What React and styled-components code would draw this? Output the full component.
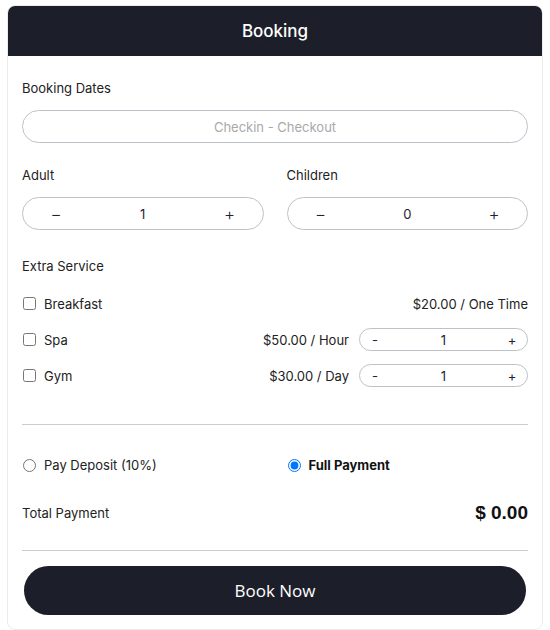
import { useState } from "react";
import styled, { createGlobalStyle } from "styled-components";

const GlobalStyle = createGlobalStyle`
  body {
    margin: 0;
    background: #fff;
    font-family: Inter, "Noto Sans", sans-serif;
    color: #222;
  }
`;

export default function App() {
  const [adult, setAdult] = useState(1);
  const [children, setChildren] = useState(0);
  const [spa, setSpa] = useState(1);
  const [gym, setGym] = useState(1);
  const [payment, setPayment] = useState("full");

  return (
    <>
      <GlobalStyle />
      <Card>
        <Header>Booking</Header>
        <Body>
          <Label>Booking Dates</Label>
          <DateInput placeholder="Checkin - Checkout" />

          <Guests>
            <div>
              <Label>Adult</Label>
              <Stepper>
                <StepButton onClick={() => setAdult(Math.max(0, adult - 1))}>−</StepButton>
                <StepValue>{adult}</StepValue>
                <StepButton onClick={() => setAdult(adult + 1)}>+</StepButton>
              </Stepper>
            </div>
            <div>
              <Label>Children</Label>
              <Stepper>
                <StepButton onClick={() => setChildren(Math.max(0, children - 1))}>−</StepButton>
                <StepValue>{children}</StepValue>
                <StepButton onClick={() => setChildren(children + 1)}>+</StepButton>
              </Stepper>
            </div>
          </Guests>

          <Label $top={26}>Extra Service</Label>
          <Services>
            <ServiceRow>
              <Check>
                <input type="checkbox" />
                Breakfast
              </Check>
              <Price>$20.00 / One Time</Price>
            </ServiceRow>
            <ServiceRow>
              <Check>
                <input type="checkbox" />
                Spa
              </Check>
              <Price>$50.00 / Hour</Price>
              <SmallStepper>
                <SmallButton onClick={() => setSpa(Math.max(1, spa - 1))}>-</SmallButton>
                <SmallValue>{spa}</SmallValue>
                <SmallButton onClick={() => setSpa(spa + 1)}>+</SmallButton>
              </SmallStepper>
            </ServiceRow>
            <ServiceRow>
              <Check>
                <input type="checkbox" />
                Gym
              </Check>
              <Price>$30.00 / Day</Price>
              <SmallStepper>
                <SmallButton onClick={() => setGym(Math.max(1, gym - 1))}>-</SmallButton>
                <SmallValue>{gym}</SmallValue>
                <SmallButton onClick={() => setGym(gym + 1)}>+</SmallButton>
              </SmallStepper>
            </ServiceRow>
          </Services>

          <Divider $top={37} />

          <Payments>
            <Radio>
              <input
                type="radio"
                name="payment"
                checked={payment === "deposit"}
                onChange={() => setPayment("deposit")}
              />
              Pay Deposit (10%)
            </Radio>
            <Radio $bold={payment === "full"}>
              <input
                type="radio"
                name="payment"
                checked={payment === "full"}
                onChange={() => setPayment("full")}
              />
              Full Payment
            </Radio>
          </Payments>

          <Total>
            <span>Total Payment</span>
            <Amount>$ 0.00</Amount>
          </Total>

          <Divider $top={25} />
          <BookButton>Book Now</BookButton>
        </Body>
      </Card>
    </>
  );
}

const Card = styled.div`
  width: 536px;
  box-sizing: border-box;
  margin: 5px 0 0 7px;
  border: 1px solid #ececec;
  border-radius: 8px;
  overflow: hidden;
  background: #fff;
`;

const Header = styled.div`
  height: 51px;
  margin: -1px -1px 0;
  background: #1c1f29;
  color: #fff;
  font-size: 17px;
  font-weight: 500;
  display: flex;
  align-items: center;
  justify-content: center;
`;

const Body = styled.div`
  padding: 22px 14px 14px 14px;
  display: flex;
  flex-direction: column;
`;

const Label = styled.div`
  font-size: 13px;
  line-height: 20px;
  margin-top: ${(props) => props.$top || 0}px;
  margin-bottom: 12px;
`;

const DateInput = styled.input`
  height: 33px;
  box-sizing: border-box;
  border: 1px solid #bcc2ca;
  border-radius: 17px;
  text-align: center;
  font-family: inherit;
  font-size: 13px;
  outline: none;
  &::placeholder {
    color: #a9a9a9;
  }
`;

const Guests = styled.div`
  display: grid;
  grid-template-columns: 1fr 1fr;
  gap: 23px;
  margin-top: 22px;
`;

const Stepper = styled.div`
  height: 33px;
  box-sizing: border-box;
  border: 1px solid #bcc2ca;
  border-radius: 17px;
  display: flex;
  align-items: center;
`;

const StepButton = styled.button`
  width: 66px;
  height: 100%;
  border: none;
  background: none;
  font-family: inherit;
  font-size: 17px;
  font-weight: 300;
  color: #1c2333;
  cursor: pointer;
`;

const StepValue = styled.span`
  flex: 1;
  text-align: center;
  font-size: 13px;
  color: #1c2333;
`;

const Services = styled.div`
  display: flex;
  flex-direction: column;
  gap: 13px;
  margin-top: 4px;
`;

const ServiceRow = styled.div`
  height: 23px;
  display: flex;
  align-items: center;
  gap: 10px;
  font-size: 13px;
`;

const Check = styled.label`
  flex: 1;
  display: flex;
  align-items: center;
  gap: 8px;
  input {
    width: 13px;
    height: 13px;
    margin: 0 0 0 1px;
  }
`;

const Price = styled.span`
  color: #222;
`;

const SmallStepper = styled.div`
  width: 169px;
  height: 23px;
  box-sizing: border-box;
  border: 1px solid #bcc2ca;
  border-radius: 12px;
  display: flex;
  align-items: center;
`;

const SmallButton = styled.button`
  width: 30px;
  height: 100%;
  border: none;
  background: none;
  font-family: inherit;
  font-size: 13px;
  color: #1c2333;
  cursor: pointer;
`;

const SmallValue = styled.span`
  flex: 1;
  text-align: center;
  font-size: 13px;
  color: #1c2333;
`;

const Divider = styled.hr`
  width: 100%;
  margin: ${(props) => props.$top}px 0 0;
  border: none;
  border-top: 1px solid #cccccc;
`;

const Payments = styled.div`
  display: grid;
  grid-template-columns: 1fr 1fr;
  gap: 23px;
  margin-top: 30px;
`;

const Radio = styled.label`
  display: flex;
  align-items: center;
  gap: 8px;
  height: 20px;
  font-size: 13px;
  font-weight: ${(props) => (props.$bold ? 700 : 400)};
  color: ${(props) => (props.$bold ? "#111" : "#222")};
  input {
    width: 13px;
    height: 13px;
    margin: 0 0 0 1px;
  }
`;

const Total = styled.div`
  display: flex;
  align-items: center;
  justify-content: space-between;
  height: 24px;
  margin-top: 26px;
  font-size: 13px;
`;

const Amount = styled.span`
  font-family: "Liberation Sans", Arial, sans-serif;
  font-weight: 700;
  font-size: 19px;
  color: #111;
`;

const BookButton = styled.button`
  margin: 15px 2px 0;
  height: 49px;
  border: none;
  border-radius: 25px;
  background: #1c1f29;
  color: #fff;
  font-family: "Open Sans", sans-serif;
  font-size: 17px;
  cursor: pointer;
`;
